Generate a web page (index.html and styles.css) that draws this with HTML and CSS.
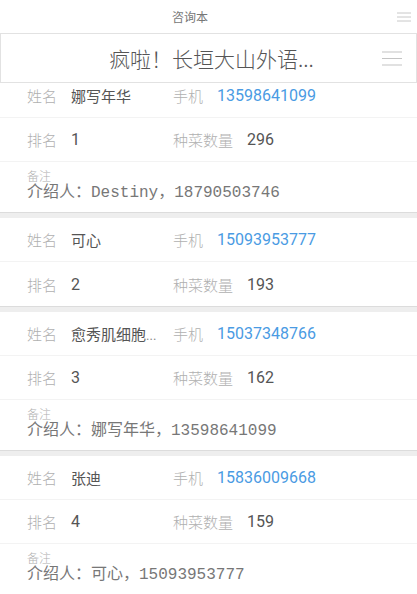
FILE: index.html
```html
<!DOCTYPE html>
<html>
<head>
  <title>咨询本</title>
  <meta name="viewport" content="width=device-width,initial-scale=1.0">
  <link rel="stylesheet" href="styles.css">
</head>
<body>

  <div class="topbar">
    <span class="topbar-title">咨询本</span>
    <svg class="topbar-menu" width="14" height="10" viewBox="0 0 14 10">
      <path d="M0 1h14M0 5h14M0 9h14" stroke="#c8c8c8" stroke-width="1"/>
    </svg>
  </div>

  <div class="header">
    <h1>疯啦！长垣大山外语...</h1>
    <svg class="header-menu" width="20" height="15" viewBox="0 0 20 15">
      <path d="M0 1h20M0 7.5h20M0 14h20" stroke="#c4c4c4" stroke-width="1.2"/>
    </svg>
  </div>

  <div class="list">

    <div class="card">
      <div class="row">
        <div class="cell"><span class="label">姓名</span><span class="value">娜写年华</span></div>
        <div class="cell"><span class="label">手机</span><span class="value phone">13598641099</span></div>
      </div>
      <div class="row">
        <div class="cell"><span class="label">排名</span><span class="value num">1</span></div>
        <div class="cell"><span class="label">种菜数量</span><span class="value num">296</span></div>
      </div>
      <div class="note">
        <div class="note-label">备注</div>
        <div class="note-text">介绍人：Destiny，18790503746</div>
      </div>
    </div>

    <div class="card">
      <div class="row">
        <div class="cell"><span class="label">姓名</span><span class="value">可心</span></div>
        <div class="cell"><span class="label">手机</span><span class="value phone">15093953777</span></div>
      </div>
      <div class="row">
        <div class="cell"><span class="label">排名</span><span class="value num">2</span></div>
        <div class="cell"><span class="label">种菜数量</span><span class="value num">193</span></div>
      </div>
    </div>

    <div class="card">
      <div class="row">
        <div class="cell"><span class="label">姓名</span><span class="value">愈秀肌细胞<span class="dots">...</span></span></div>
        <div class="cell"><span class="label">手机</span><span class="value phone">15037348766</span></div>
      </div>
      <div class="row">
        <div class="cell"><span class="label">排名</span><span class="value num">3</span></div>
        <div class="cell"><span class="label">种菜数量</span><span class="value num">162</span></div>
      </div>
      <div class="note">
        <div class="note-label">备注</div>
        <div class="note-text">介绍人：娜写年华，13598641099</div>
      </div>
    </div>

    <div class="card">
      <div class="row">
        <div class="cell"><span class="label">姓名</span><span class="value">张迪</span></div>
        <div class="cell"><span class="label">手机</span><span class="value phone">15836009668</span></div>
      </div>
      <div class="row">
        <div class="cell"><span class="label">排名</span><span class="value num">4</span></div>
        <div class="cell"><span class="label">种菜数量</span><span class="value num">159</span></div>
      </div>
      <div class="note">
        <div class="note-label">备注</div>
        <div class="note-text">介绍人：可心，15093953777</div>
      </div>
    </div>

  </div>

</body>
</html>
```

FILE: styles.css
```css
  body{
    margin: 0;
    background-color: #fff;
    font-family: "Noto Sans CJK SC", sans-serif;
    overflow: hidden;
  }

  /* 顶部标题栏 */
  .topbar{
    height: 33px;
    display: flex;
    align-items: center;
    background-color: #fff;
  }
  .topbar-title{
    flex: 1;
    text-align: center;
    font-size: 12px;
    color: #777;
  }
  .topbar-menu{
    margin: 0 6px 0 17px;
  }

  .header{
    position: relative;
    z-index: 1;
    height: 50px;
    box-sizing: border-box;
    display: flex;
    align-items: center;
    background-color: #fff;
    border: 1px solid #e2e2e2;
  }
  .header h1{
    flex: 1;
    margin: 0;
    padding-left: 40px;
    text-align: center;
    font-size: 21px;
    font-weight: 300;
    color: #555;
  }
  .header-menu{
    margin-right: 14px;
  }

  /* 列表 */
  .list{
    margin-top: -9px;
    background-color: #eee;
  }

  .card{
    background-color: #fff;
    border-bottom: 1px solid #dcdcdc;
    margin-bottom: 5px;
  }

  .row{
    height: 44px;
    box-sizing: border-box;
    display: grid;
    grid-template-columns: 146px 1fr;
    align-items: center;
    padding-left: 27px;
    border-bottom: 1px solid #f3f3f3;
  }
  .row:last-child{
    border-bottom: none;
  }

  .cell{
    display: flex;
    align-items: center;
    white-space: nowrap;
  }
  .label{
    font-size: 15px;
    font-weight: 300;
    color: #b0b0b0;
    margin-right: 14px;
  }
  .value{
    font-size: 15px;
    color: #555;
  }
  .dots{
    font-family: Roboto, sans-serif;
    font-size: 13px;
    color: #888;
  }
  .num{
    font-family: Roboto, sans-serif;
    font-size: 16px;
  }
  .phone{
    font-family: Roboto, sans-serif;
    font-size: 16px;
    color: #4a9be3;
  }

  .note{
    height: 50px;
    box-sizing: border-box;
    padding: 6px 27px 0;
  }
  .note-label{
    font-size: 12px;
    font-weight: 300;
    line-height: 15px;
    color: #b0b0b0;
  }
  .note-text{
    margin-top: 1px;
    font-family: "Liberation Mono", "Noto Sans CJK SC", monospace;
    font-size: 16px;
    line-height: 18px;
    color: #777;
    white-space: nowrap;
  }
```
